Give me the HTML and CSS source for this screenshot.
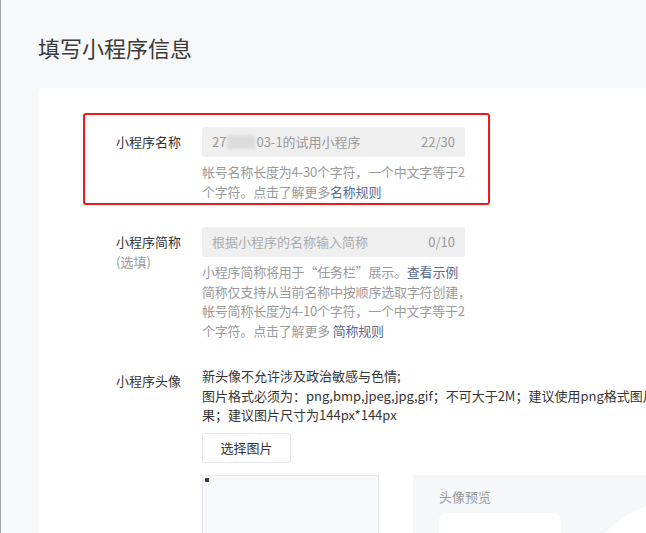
FILE: index.html
```html
<!DOCTYPE html>
<html lang="zh-CN">
  <head>
    <meta charset="UTF-8" />
    <meta name="viewport" content="width=device-width, initial-scale=1.0" />
    <title>填写小程序信息</title>
    <link rel="stylesheet" href="styles.css">
  </head>
  <body>
    <div class="page">
      <h2 class="page-title">填写小程序信息</h2>

      <div class="card">
        <!-- 名称 -->
        <div class="form-row form-row-marked">
          <label class="form-label">小程序名称</label>
          <div class="form-field">
            <div class="input">
              <span class="input-value">27<span class="mosaic"></span>03-1的试用小程序</span>
              <span class="input-count">22/30</span>
            </div>
            <p class="form-tips">
              帐号名称长度为4-30个字符，一个中文字等于2<br>
              个字符。点击了解更多<a href="#">名称规则</a>
            </p>
          </div>
        </div>

        <!-- 简称 -->
        <div class="form-row">
          <label class="form-label">小程序简称<span class="form-label-sub">(选填)</span></label>
          <div class="form-field">
            <div class="input">
              <span class="input-placeholder">根据小程序的名称输入简称</span>
              <span class="input-count">0/10</span>
            </div>
            <p class="form-tips">
              小程序简称将用于“任务栏”展示。<a href="#">查看示例</a><br>
              简称仅支持从当前名称中按顺序选取字符创建，<br>
              帐号简称长度为4-10个字符，一个中文字等于2<br>
              个字符。点击了解更多 <a href="#">简称规则</a>
            </p>
          </div>
        </div>

        <!-- 头像 -->
        <div class="form-row">
          <label class="form-label">小程序头像</label>
          <div class="form-field form-field-wide">
            <p class="form-desc">
              新头像不允许涉及政治敏感与色情;<br>
              图片格式必须为：png,bmp,jpeg,jpg,gif；不可大于2M；建议使用png格式图片，<br>
              果；建议图片尺寸为144px*144px
            </p>
            <button class="btn">选择图片</button>

            <div class="avatar">
              <div class="avatar-crop">
                <i class="avatar-broken"></i>
              </div>
              <div class="avatar-preview">
                <div class="avatar-preview-title">头像预览</div>
                <div class="avatar-preview-square"></div>
                <div class="avatar-preview-circle"></div>
              </div>
            </div>
          </div>
        </div>
      </div>
    </div>
  </body>
</html>
```

FILE: styles.css
```css
html,
body {
  margin: 0;
  padding: 0;
  height: 100%;
  overflow: hidden;
}

body {
  background-color: #f7f8fa;
  color: #353535;
  font: 13px/1.5 "Noto Sans CJK SC", "Noto Sans", sans-serif;
}

p {
  margin: 0;
}

a {
  color: #576b95;
  text-decoration: none;
}

.page {
  min-height: 100%;
  border-left: 1px solid #a3a3a3;
  padding-left: 37px;
}

.page-title {
  margin: 0;
  padding-top: 32px;
  height: 88px;
  box-sizing: border-box;
  font-size: 22px;
  line-height: 30px;
  font-weight: normal;
  color: #3a3a3a;
}

.card {
  background-color: #fff;
  border-radius: 4px 0 0 0;
  padding: 39px 0 40px 78px;
  min-height: 600px;
}

/* 表单行 */
.form-row {
  position: relative;
  display: flex;
  margin-bottom: 26px;
}

.form-row-marked::after {
  content: "";
  position: absolute;
  top: -14px;
  left: -33px;
  width: 407px;
  height: 92px;
  box-sizing: border-box;
  border: 2px solid #f5171b;
  border-radius: 3px;
  pointer-events: none;
}

.form-label {
  width: 86px;
  flex-shrink: 0;
  padding-top: 5px;
  line-height: 20px;
  color: #353535;
}

.form-label-sub {
  display: block;
  color: #9a9a9a;
}

.form-field {
  width: 263px;
}

.form-field-wide {
  width: 700px;
}

.input {
  display: flex;
  justify-content: space-between;
  align-items: center;
  height: 30px;
  padding: 0 10px;
  background-color: #efefef;
  border-radius: 3px;
  color: #9a9a9a;
}

.input-placeholder {
  color: #acacac;
}

.mosaic {
  display: inline-block;
  width: 28px;
  height: 14px;
  margin: 0 1px;
  vertical-align: -2px;
  background-color: #dcdcdc;
  filter: blur(1.5px);
}

.form-tips {
  margin-top: 5px;
  color: #9a9a9a;
  line-height: 19.5px;
  white-space: nowrap;
  letter-spacing: -0.2px;
}

.form-desc {
  line-height: 19.5px;
  white-space: nowrap;
}

.btn {
  margin-top: 8px;
  width: 89px;
  height: 30px;
  padding: 0;
  background-color: #fff;
  border: 1px solid #e4e8eb;
  border-radius: 3px;
  font: inherit;
  color: #353535;
}

/* 头像 */
.avatar {
  display: flex;
  gap: 34px;
  margin-top: 12px;
}

.avatar-crop {
  position: relative;
  width: 177px;
  height: 180px;
  box-sizing: border-box;
  background-color: #f7f8fa;
  border: 1px solid #e7e7eb;
}

.avatar-broken {
  position: absolute;
  top: 2px;
  left: 2px;
  width: 4px;
  height: 4px;
  background-color: #3c3c3c;
}

.avatar-preview {
  position: relative;
  width: 400px;
  height: 180px;
  padding: 12px 26px 0;
  box-sizing: border-box;
  background-color: #f6f7f9;
  overflow: hidden;
}

.avatar-preview-title {
  line-height: 20px;
  color: #9a9a9a;
}

.avatar-preview-square {
  margin-top: 6px;
  width: 122px;
  height: 122px;
  background-color: #fff;
  border-radius: 8px;
}

.avatar-preview-circle {
  position: absolute;
  top: 23px;
  left: 155px;
  width: 244px;
  height: 244px;
  border-radius: 50%;
  background-color: #fff;
}
```
